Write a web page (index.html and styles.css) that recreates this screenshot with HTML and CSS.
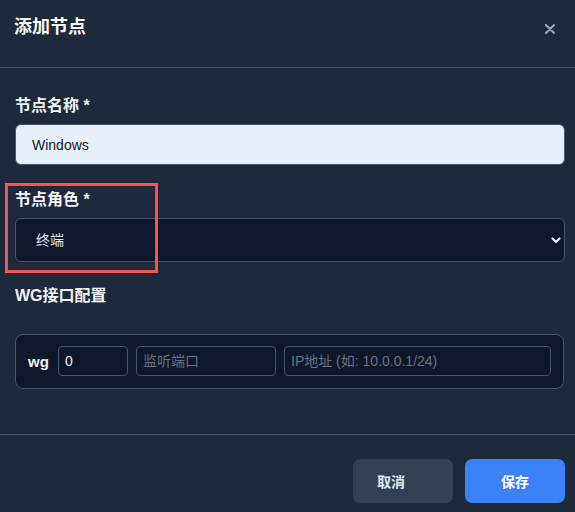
FILE: index.html
```html
<!DOCTYPE html>
<html lang="zh-CN">
<head>
<meta charset="utf-8">
<title>添加节点</title>
<link rel="stylesheet" href="styles.css">
</head>
<body>
<div class="dialog">
  <div class="header">
    <h2 class="title">添加节点</h2>
    <button class="close" type="button" aria-label="关闭">
      <svg width="10" height="10" viewBox="0 0 10 10"><path d="M1 1L9 9M9 1L1 9" stroke="#94a3b8" stroke-width="2.2" stroke-linecap="round"/></svg>
    </button>
  </div>
  <div class="body">
    <div class="group">
      <label class="label">节点名称 *</label>
      <input class="text-input" type="text" value="Windows">
    </div>
    <div class="group">
      <label class="label">节点角色 *</label>
      <div class="select-wrap">
        <select class="select"><option>终端</option></select>
        <svg class="chevron" width="10" height="7" viewBox="0 0 10 7"><path d="M1.5 1.5L5 5L8.5 1.5" fill="none" stroke="#e5e7eb" stroke-width="2.2" stroke-linecap="round" stroke-linejoin="round"/></svg>
      </div>
    </div>
    <div class="group wg-group">
      <label class="label">WG接口配置</label>
      <div class="wg-box">
        <span class="wg-prefix">wg</span>
        <input class="wg-input idx" type="text" value="0">
        <input class="wg-input port" type="text" placeholder="监听端口">
        <input class="wg-input ip" type="text" placeholder="IP地址 (如: 10.0.0.1/24)">
      </div>
    </div>
  </div>
  <div class="footer">
    <button class="btn cancel" type="button">取消</button>
    <button class="btn save" type="button">保存</button>
  </div>
  <div class="highlight"></div>
</div>
</body>
</html>
```

FILE: styles.css
```css
* { box-sizing: border-box; }
html, body { margin: 0; padding: 0; }
body {
  background: #1e293b;
  font-family: "Liberation Sans", "Noto Sans CJK SC", sans-serif;
  color: #f1f5f9;
}
.dialog {
  position: relative;
  width: 575px;
  min-height: 512px;
  background: #1e293b;
}
.header {
  display: flex;
  justify-content: space-between;
  align-items: center;
  padding: 14px 20px 26px 14px;
  border-bottom: 1px solid #475569;
}
.title {
  margin: 0;
  font-size: 18px;
  line-height: 27px;
  font-weight: 700;
  color: #f8fafc;
}
.close {
  display: flex;
  align-items: center;
  justify-content: center;
  width: 10px;
  height: 10px;
  padding: 0;
  margin-top: 2px;
  border: 0;
  background: transparent;
}
.body {
  padding: 28px 10px 45px 15px;
}
.group { margin-bottom: 25px; }
.group + .group { margin-bottom: 24px; }
.group.wg-group { margin-bottom: 0; }
.label {
  display: block;
  font-size: 16px;
  line-height: 20px;
  font-weight: 700;
  color: #f1f5f9;
  margin-bottom: 8px;
}
.wg-group .label { margin-bottom: 28px; }
.text-input {
  display: block;
  width: 100%;
  height: 41px;
  padding: 0 16px;
  border: 1px solid #475569;
  border-radius: 6px;
  background: #e8f0fe;
  color: #111827;
  font-family: "Liberation Sans", "Noto Sans CJK SC", sans-serif;
  font-size: 14px;
  outline: none;
}
.select-wrap { position: relative; }
.select {
  display: block;
  width: 100%;
  height: 44px;
  padding: 0 20px;
  border: 1px solid #475569;
  border-radius: 6px;
  background: #0f172a;
  color: #e2e8f0;
  font-family: "Liberation Sans", "Noto Sans CJK SC", sans-serif;
  font-size: 14px;
  appearance: none;
  -webkit-appearance: none;
  outline: none;
}
.chevron {
  position: absolute;
  right: 4px;
  top: 19px;
  pointer-events: none;
}
.wg-box {
  display: flex;
  align-items: center;
  gap: 8px;
  width: 549px;
  padding: 11px 12px 12px 12px;
  border: 1px solid #475569;
  border-radius: 8px;
  background: #0f172a;
}
.wg-prefix {
  font-size: 15px;
  font-weight: 700;
  color: #f1f5f9;
  width: 22px;
}
.wg-input {
  height: 30px;
  padding: 0 6px;
  border: 1px solid #475569;
  border-radius: 4px;
  background: #0f172a;
  color: #f1f5f9;
  font-family: "Liberation Sans", "Noto Sans CJK SC", sans-serif;
  font-size: 14px;
  outline: none;
}
.wg-input::placeholder { color: #6b7280; }
.wg-input.idx { width: 70px; }
.wg-input.port { width: 140px; }
.wg-input.ip { flex: 1; min-width: 0; }
.footer {
  display: flex;
  justify-content: flex-end;
  gap: 12px;
  padding: 24px 10px 0 15px;
  border-top: 1px solid #475569;
}
.btn {
  width: 100px;
  height: 44px;
  border: 0;
  border-radius: 7px;
  font-family: "Liberation Sans", "Noto Sans CJK SC", sans-serif;
  font-size: 14px;
  font-weight: 700;
}
.btn.cancel { background: #334155; color: #e2e8f0; padding: 0 24px 0 0; }
.btn.save { background: #3b82f6; color: #ffffff; }
.highlight {
  position: absolute;
  left: 5px;
  top: 183px;
  width: 153px;
  height: 90px;
  border: 3px solid #f55454;
  pointer-events: none;
}
```
